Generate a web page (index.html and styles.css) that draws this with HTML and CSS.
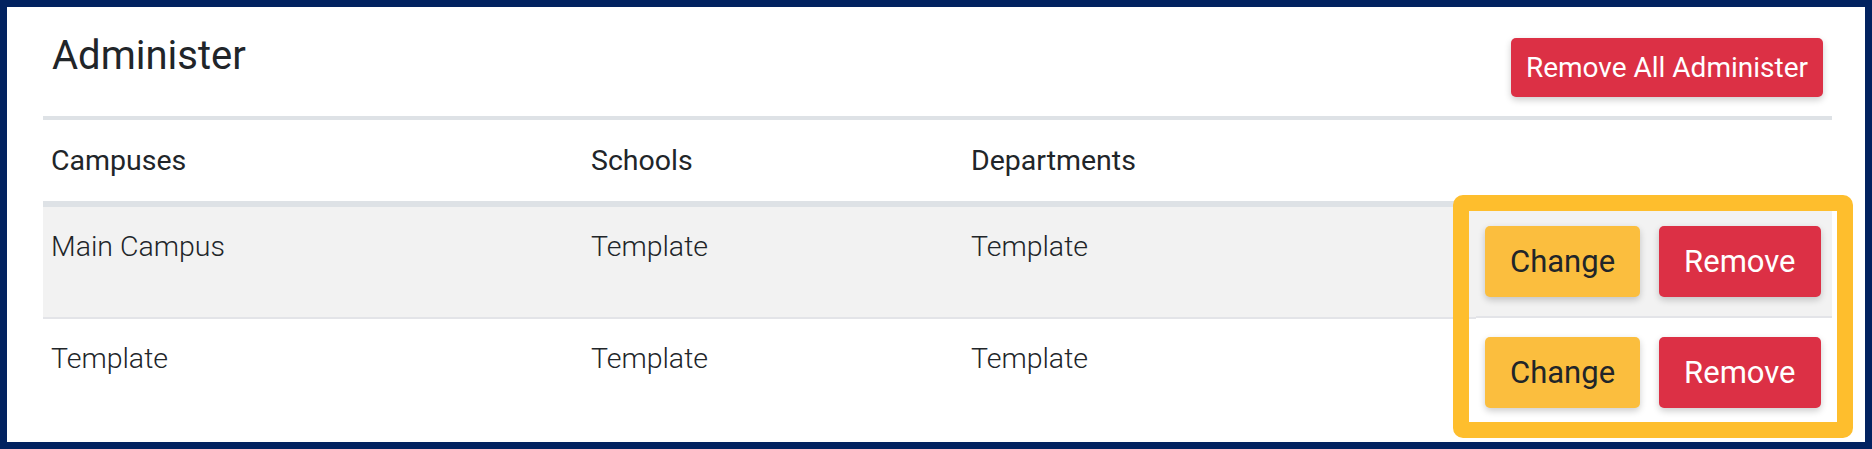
FILE: index.html
```html
<!DOCTYPE html>
<html lang="en">
<head>
    <meta charset="UTF-8">
    <meta name="viewport" content="width=device-width, initial-scale=1.0">
    <title>Administer</title>
    <link rel="stylesheet" href="styles.css">
</head>
<body>
    <div class="frame">
        <div class="card-header">
            <h2 class="card-title">Administer</h2>
            <button type="button" class="btn btn-danger">Remove All Administer</button>
        </div>
        <table class="admin-table">
            <colgroup>
                <col class="col-campus">
                <col class="col-school">
                <col class="col-dept">
                <col class="col-actions">
            </colgroup>
            <thead>
                <tr>
                    <th>Campuses</th>
                    <th>Schools</th>
                    <th>Departments</th>
                    <th></th>
                </tr>
            </thead>
            <tbody>
                <tr class="striped">
                    <td>Main Campus</td>
                    <td>Template</td>
                    <td>Template</td>
                    <td class="actions">
                        <button type="button" class="btn btn-lg btn-warning">Change</button>
                        <button type="button" class="btn btn-lg btn-danger">Remove</button>
                    </td>
                </tr>
                <tr>
                    <td>Template</td>
                    <td>Template</td>
                    <td>Template</td>
                    <td class="actions">
                        <button type="button" class="btn btn-lg btn-warning">Change</button>
                        <button type="button" class="btn btn-lg btn-danger">Remove</button>
                    </td>
                </tr>
            </tbody>
        </table>
        <!-- highlight around the row actions -->
        <div class="highlight"></div>
    </div>
</body>
</html>
```

FILE: styles.css
```css
body {
    margin: 0;
    padding: 0;
    font-family: Roboto, "Liberation Sans", sans-serif;
    color: #212529;
}
.frame {
    position: relative;
    height: 449px;
    box-sizing: border-box;
    border: 7px solid #022260;
    background-color: #fff;
    padding: 0 33px 0 36px;
}
.card-header {
    display: flex;
    justify-content: space-between;
    align-items: flex-start;
    padding: 31px 9px 19px;
    border-bottom: 4px solid #dee2e6;
}
.card-title {
    margin: -6px 0 0;
    font-size: 40px;
    font-weight: 400;
    line-height: 48px;
}
.btn {
    font-family: inherit;
    font-size: 28px;
    line-height: 43px;
    padding: 8px 15px;
    border: none;
    border-radius: 5px;
    cursor: pointer;
    box-shadow: 0 3px 7px rgba(0, 0, 0, 0.2);
}
.btn-lg {
    font-size: 31px;
    line-height: 47px;
    padding: 12px 25px;
}
.btn-danger {
    background-color: #dc3045;
    color: #fff;
}
.btn-warning {
    background-color: #fbbe3e;
    color: #212529;
}
.admin-table {
    width: 100%;
    border-collapse: collapse;
    table-layout: fixed;
}
.col-campus {
    width: 540px;
}
.col-school {
    width: 380px;
}
.col-dept {
    width: 513px;
}
th {
    text-align: left;
    font-size: 28.5px;
    font-weight: 400;
    line-height: 42px;
    padding: 20px 8px 19px;
    border-bottom: 6px solid #dee2e6;
}
td {
    font-size: 28.5px;
    font-weight: 300;
    line-height: 42px;
    padding: 19px 8px;
    vertical-align: top;
    border-bottom: 2px solid #e3e4e8;
}
tbody tr:last-child td {
    border-bottom: none;
}
.striped {
    background-color: #f2f2f2;
}
.actions {
    display: flex;
    gap: 19px;
    padding-left: 9px;
}
.highlight {
    position: absolute;
    right: 12px;
    bottom: 4px;
    width: 400px;
    height: 243px;
    box-sizing: border-box;
    border: 16px solid #febe2d;
    border-radius: 10px;
    pointer-events: none;
}
```
